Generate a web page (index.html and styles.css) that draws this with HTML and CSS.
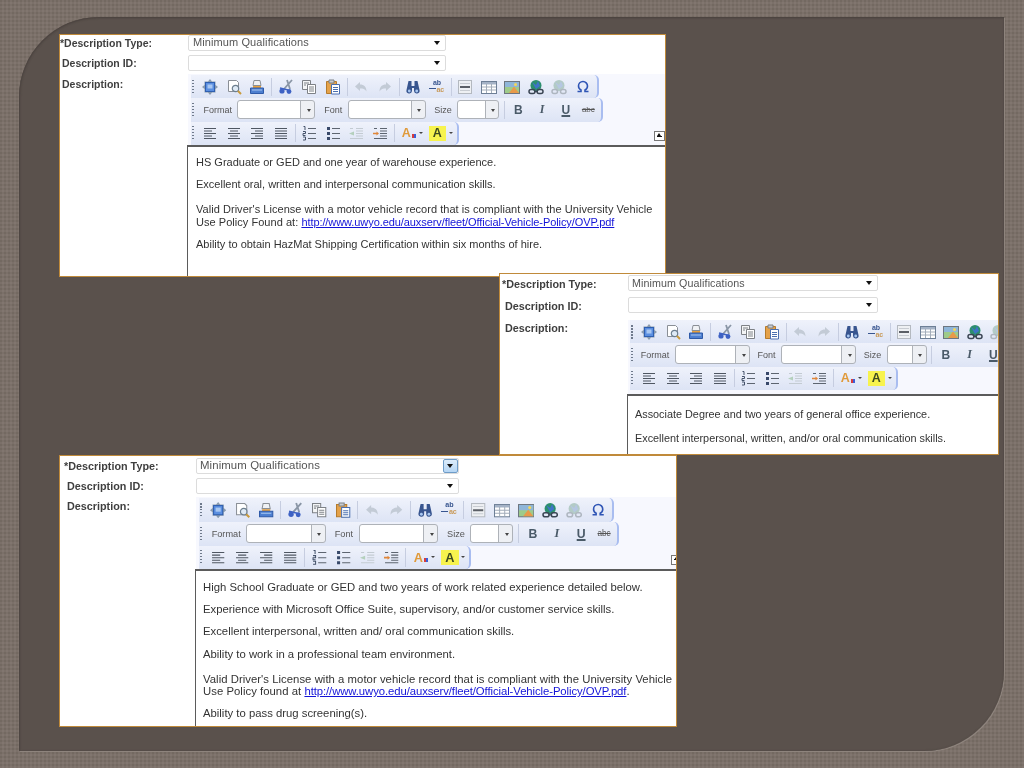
FILE: index.html
```html
<!DOCTYPE html>
<html lang="en">
<head>
<meta charset="utf-8">
<title>Description Examples</title>
<link rel="stylesheet" href="styles.css">
</head>
<body>
<svg class="defs" aria-hidden="true">
  <symbol id="fit" viewBox="0 0 16 16"><path d="M8 0l2 2.500h3.500V6L16 8l-2.500 2v3.500H10L8 16l-2-2.500H2.500V10L0 8l2.500-2V2.500H6z" fill="#8a9bae"/><rect x="3.500" y="3.500" width="9" height="9" fill="#5b8fe0" stroke="#2f5fb0"/><rect x="5.500" y="5.500" width="5" height="4" fill="#a9c8f2"/></symbol>
  <symbol id="preview" viewBox="0 0 16 16"><path d="M2.500 1.500h8l2 2v9h-10z" fill="#fff" stroke="#8a8f96"/><circle cx="9.500" cy="9.500" r="3.200" fill="#dfeaf5" stroke="#6d7f8f" stroke-width="1.200"/><path d="M12 12l3 3" stroke="#c99a3c" stroke-width="2"/></symbol>
  <symbol id="print" viewBox="0 0 16 16"><path d="M5 1.500h6l1 5H4z" fill="#f0f2f5" stroke="#8a8f96"/><path d="M4 7h8v2H4z" fill="#e9a13c"/><path d="M1.500 9h13v5.500h-13z" fill="#4d7fd0" stroke="#2f5aa8"/><path d="M3 11h10" stroke="#a9c8f2"/></symbol>
  <symbol id="cut" viewBox="0 0 16 16"><path d="M14 1L6 10M9 1l3 9" stroke="#8a96a6" stroke-width="1.800" fill="none"/><circle cx="4" cy="12" r="2.600" fill="#3e62c4"/><circle cx="11" cy="12.500" r="2.400" fill="#3e62c4"/><path d="M2 9l8 2" stroke="#3e62c4" stroke-width="1.500"/></symbol>
  <symbol id="copy" viewBox="0 0 16 16"><path d="M1.500 1.500h8v9h-8z" fill="#f4f5f6" stroke="#7d8186"/><path d="M6.500 5.500h8v9h-8z" fill="#fff" stroke="#7d8186"/><path d="M8 8h5M8 10h5M8 12h5M3 4h5M3 6h2" stroke="#7d8186"/></symbol>
  <symbol id="paste" viewBox="0 0 16 16"><path d="M1.500 2.500h10v12h-10z" fill="#e5a24a" stroke="#b57b2c"/><path d="M4 1h5v3H4z" fill="#c9ccd1" stroke="#7d8186"/><path d="M6.500 5.500h8v9.500h-8z" fill="#fff" stroke="#4a6fb0"/><path d="M8 8.500h5M8 10.500h5M8 12.500h5" stroke="#4a6fb0"/></symbol>
  <symbol id="undo" viewBox="0 0 16 16"><path d="M7 3L2 7.500 7 12V9.500c3 0 5 .5 6.500 3C13.500 8 11 5.500 7 5.500z" fill="#c3cbd6"/></symbol>
  <symbol id="redo" viewBox="0 0 16 16"><path d="M9 3l5 4.500L9 12V9.500c-3 0-5 .5-6.500 3C2.500 8 5 5.500 9 5.500z" fill="#c3cbd6"/></symbol>
  <symbol id="find" viewBox="0 0 16 16"><path d="M3.500 2h3v5h3V2h3l2 9a2.800 2.800 0 1 1-5.500 1V9h-2v3A2.800 2.800 0 1 1 1.500 11z" fill="#38558f"/><circle cx="4.300" cy="12" r="1.400" fill="#a9c8f2"/><circle cx="11.700" cy="12" r="1.400" fill="#a9c8f2"/></symbol>
  <symbol id="hr" viewBox="0 0 16 16"><rect x="1.500" y="1.500" width="13" height="13" fill="#eef0f3" stroke="#b4b9c0"/><path d="M3 8h10" stroke="#5b5f66" stroke-width="2"/><path d="M3 4.500h10M3 11.500h10" stroke="#c8ccd2"/></symbol>
  <symbol id="table" viewBox="0 0 16 16"><rect x=".5" y="2.500" width="15" height="12" fill="#fff" stroke="#6d7f96"/><path d="M1 3h14v2.500H1z" fill="#a4b2c6"/><path d="M5.500 5v9M10.500 5v9M1 8h14M1 11h14" stroke="#a3adba"/></symbol>
  <symbol id="image" viewBox="0 0 16 16"><rect x=".5" y="2.500" width="15" height="12" fill="#9ecb8a" stroke="#6d7680"/><path d="M1 3h14v5H1z" fill="#8fb6d9"/><path d="M5 14l5-6.500 5 6.500z" fill="#e89a4a"/><circle cx="11.500" cy="5.500" r="1.500" fill="#f4d65a"/></symbol>
  <symbol id="link" viewBox="0 0 16 16"><circle cx="8" cy="6.500" r="5.500" fill="#2c8f6e"/><path d="M4 3l4 3 2-4 2 5-4 3z" fill="#3f74c8"/><rect x="1" y="10.500" width="6" height="4" rx="2" fill="none" stroke="#3b4654" stroke-width="1.500"/><rect x="9" y="10.500" width="6" height="4" rx="2" fill="none" stroke="#3b4654" stroke-width="1.500"/><path d="M6 12.500h4" stroke="#3b4654"/></symbol>
  <symbol id="unlink" viewBox="0 0 16 16"><circle cx="8" cy="6.500" r="5.500" fill="#b3cbc6"/><path d="M4 3l4 3 2-4 2 5-4 3z" fill="#b5c7e2"/><rect x="1" y="10.500" width="5.500" height="4" rx="2" fill="none" stroke="#aeb6c0" stroke-width="1.500"/><rect x="9.500" y="10.500" width="5.500" height="4" rx="2" fill="none" stroke="#aeb6c0" stroke-width="1.500"/></symbol>
  <symbol id="omega" viewBox="0 0 16 16"><path d="M2.500 12.500h3.500v-1.500A4.500 4.500 0 0 1 3.500 7a4.500 4.500 0 0 1 9 0A4.500 4.500 0 0 1 10 11v1.500h3.500" fill="none" stroke="#2f55b5" stroke-width="1.600"/></symbol>
  <symbol id="al" viewBox="0 0 16 16"><path d="M2 3.500h12M2 6h8M2 8.500h12M2 11h8M2 13.500h12" stroke="#4f5762" fill="none"/></symbol>
  <symbol id="ac" viewBox="0 0 16 16"><path d="M2 3.500h12M4 6h8M2 8.500h12M4 11h8M2 13.500h12" stroke="#4f5762" fill="none"/></symbol>
  <symbol id="ar" viewBox="0 0 16 16"><path d="M2 3.500h12M6 6h8M2 8.500h12M6 11h8M2 13.500h12" stroke="#4f5762" fill="none"/></symbol>
  <symbol id="aj" viewBox="0 0 16 16"><path d="M2 3.500h12M2 6h12M2 8.500h12M2 11h12M2 13.500h12" stroke="#4f5762" fill="none"/></symbol>
  <symbol id="ol" viewBox="0 0 16 16"><path d="M7 3.500h8M7 8.500h8M7 13.500h8" stroke="#5d6570" fill="none"/><path d="M2.500 1.500h1.500v3.500M2 6.500h2.500v2H2v2h2.500M2 12h2.500v3H2" stroke="#44526a" fill="none"/></symbol>
  <symbol id="ul" viewBox="0 0 16 16"><path d="M7 3.500h8M7 8.500h8M7 13.500h8" stroke="#5d6570" fill="none"/><path d="M2 2h3v3H2zM2 7h3v3H2zM2 12h3v3H2z" fill="#38496a"/></symbol>
  <symbol id="outdent" viewBox="0 0 16 16"><path d="M8 3.500h7M8 6h7M8 8.500h7M8 11h7M2 13.500h13M2 3.500h3" stroke="#c3cbd2" fill="none"/><path d="M6 6.500L1 8.500l5 2z" fill="#b4d0bc"/></symbol>
  <symbol id="indent" viewBox="0 0 16 16"><path d="M8 3.500h7M8 6h7M8 8.500h7M8 11h7M2 13.500h13M2 3.500h3" stroke="#5d6570" fill="none"/><path d="M1 7.700h3.500V6.500L7 8.500l-2.500 2V9.300H1z" fill="#e0863a"/></symbol>
</svg>

<main class="slide">

  <section class="shot p1">
    <div class="row"><div class="lbl req">*Description Type:</div><div class="sel"><span>Minimum Qualifications</span><i class="caret"></i></div></div>
    <div class="row"><div class="lbl">Description ID:</div><div class="sel"><span></span><i class="caret"></i></div></div>
    <div class="row grow">
      <div class="lbl last">Description:</div>
      <div class="ed">
        <div class="toolbar">
          <div class="bar">
            <i class="grip"></i>
            <svg class="ic"><use href="#fit"/></svg><svg class="ic"><use href="#preview"/></svg><svg class="ic"><use href="#print"/></svg><i class="sep"></i>
            <svg class="ic"><use href="#cut"/></svg><svg class="ic"><use href="#copy"/></svg><svg class="ic"><use href="#paste"/></svg><i class="sep"></i>
            <svg class="ic"><use href="#undo"/></svg><svg class="ic"><use href="#redo"/></svg><i class="sep"></i>
            <svg class="ic"><use href="#find"/></svg><span class="ic rep"><b>ab</b><b class="ac">ac</b></span><i class="sep"></i>
            <svg class="ic"><use href="#hr"/></svg><svg class="ic"><use href="#table"/></svg><svg class="ic"><use href="#image"/></svg><svg class="ic"><use href="#link"/></svg><svg class="ic"><use href="#unlink"/></svg><svg class="ic"><use href="#omega"/></svg>
          </div>
          <div class="bar">
            <i class="grip"></i>
            <span class="cap">Format</span><span class="combo"><i class="arrow"></i></span>
            <span class="cap">Font</span><span class="combo"><i class="arrow"></i></span>
            <span class="cap">Size</span><span class="combo short"><i class="arrow"></i></span><i class="sep"></i>
            <b class="tbtn">B</b><em class="tbtn">I</em><u class="tbtn">U</u><s class="tbtn abc">abc</s>
          </div>
          <div class="bar">
            <i class="grip"></i>
            <svg class="ic"><use href="#al"/></svg><svg class="ic"><use href="#ac"/></svg><svg class="ic"><use href="#ar"/></svg><svg class="ic"><use href="#aj"/></svg><i class="sep"></i>
            <svg class="ic"><use href="#ol"/></svg><svg class="ic"><use href="#ul"/></svg><svg class="ic"><use href="#outdent"/></svg><svg class="ic"><use href="#indent"/></svg><i class="sep"></i>
            <span class="color"><b class="a-font">A</b><i class="dots"></i><i class="mini"></i></span><span class="color"><b class="a-hi">A</b><i class="mini"></i></span>
          </div>
          <i class="collapse"></i>
        </div>
        <div class="body">
          <p>HS Graduate or GED and one year of warehouse experience.</p>
          <p>Excellent oral, written and interpersonal communication skills.</p>
          <p class="policy">Valid Driver's License with a motor vehicle record that is compliant with the University Vehicle<br>Use Policy Found at: <a href="#">http://www.uwyo.edu/auxserv/fleet/Official-Vehicle-Policy/OVP.pdf</a></p>
          <p>Ability to obtain HazMat Shipping Certification within six months of hire.</p>
        </div>
      </div>
    </div>
  </section>

  <section class="shot p2">
    <div class="row"><div class="lbl req">*Description Type:</div><div class="sel"><span>Minimum Qualifications</span><i class="caret"></i></div></div>
    <div class="row"><div class="lbl">Description ID:</div><div class="sel"><span></span><i class="caret"></i></div></div>
    <div class="row grow">
      <div class="lbl last">Description:</div>
      <div class="ed">
        <div class="toolbar">
          <div class="bar">
            <i class="grip"></i>
            <svg class="ic"><use href="#fit"/></svg><svg class="ic"><use href="#preview"/></svg><svg class="ic"><use href="#print"/></svg><i class="sep"></i>
            <svg class="ic"><use href="#cut"/></svg><svg class="ic"><use href="#copy"/></svg><svg class="ic"><use href="#paste"/></svg><i class="sep"></i>
            <svg class="ic"><use href="#undo"/></svg><svg class="ic"><use href="#redo"/></svg><i class="sep"></i>
            <svg class="ic"><use href="#find"/></svg><span class="ic rep"><b>ab</b><b class="ac">ac</b></span><i class="sep"></i>
            <svg class="ic"><use href="#hr"/></svg><svg class="ic"><use href="#table"/></svg><svg class="ic"><use href="#image"/></svg><svg class="ic"><use href="#link"/></svg><svg class="ic"><use href="#unlink"/></svg>
          </div>
          <div class="bar">
            <i class="grip"></i>
            <span class="cap">Format</span><span class="combo"><i class="arrow"></i></span>
            <span class="cap">Font</span><span class="combo"><i class="arrow"></i></span>
            <span class="cap">Size</span><span class="combo short"><i class="arrow"></i></span><i class="sep"></i>
            <b class="tbtn">B</b><em class="tbtn">I</em><u class="tbtn">U</u>
          </div>
          <div class="bar">
            <i class="grip"></i>
            <svg class="ic"><use href="#al"/></svg><svg class="ic"><use href="#ac"/></svg><svg class="ic"><use href="#ar"/></svg><svg class="ic"><use href="#aj"/></svg><i class="sep"></i>
            <svg class="ic"><use href="#ol"/></svg><svg class="ic"><use href="#ul"/></svg><svg class="ic"><use href="#outdent"/></svg><svg class="ic"><use href="#indent"/></svg><i class="sep"></i>
            <span class="color"><b class="a-font">A</b><i class="dots"></i><i class="mini"></i></span><span class="color"><b class="a-hi">A</b><i class="mini"></i></span>
          </div>
        </div>
        <div class="body">
          <p>Associate Degree and two years of general office experience.</p>
          <p>Excellent interpersonal, written, and/or oral communication skills.</p>
        </div>
      </div>
    </div>
  </section>

  <section class="shot p3">
    <div class="row"><div class="lbl req">*Description Type:</div><div class="sel"><span>Minimum Qualifications</span><i class="caret hot"></i></div></div>
    <div class="row"><div class="lbl">Description ID:</div><div class="sel"><span></span><i class="caret"></i></div></div>
    <div class="row grow">
      <div class="lbl last">Description:</div>
      <div class="ed">
        <div class="toolbar">
          <div class="bar">
            <i class="grip"></i>
            <svg class="ic"><use href="#fit"/></svg><svg class="ic"><use href="#preview"/></svg><svg class="ic"><use href="#print"/></svg><i class="sep"></i>
            <svg class="ic"><use href="#cut"/></svg><svg class="ic"><use href="#copy"/></svg><svg class="ic"><use href="#paste"/></svg><i class="sep"></i>
            <svg class="ic"><use href="#undo"/></svg><svg class="ic"><use href="#redo"/></svg><i class="sep"></i>
            <svg class="ic"><use href="#find"/></svg><span class="ic rep"><b>ab</b><b class="ac">ac</b></span><i class="sep"></i>
            <svg class="ic"><use href="#hr"/></svg><svg class="ic"><use href="#table"/></svg><svg class="ic"><use href="#image"/></svg><svg class="ic"><use href="#link"/></svg><svg class="ic"><use href="#unlink"/></svg><svg class="ic"><use href="#omega"/></svg>
          </div>
          <div class="bar">
            <i class="grip"></i>
            <span class="cap">Format</span><span class="combo"><i class="arrow"></i></span>
            <span class="cap">Font</span><span class="combo"><i class="arrow"></i></span>
            <span class="cap">Size</span><span class="combo short"><i class="arrow"></i></span><i class="sep"></i>
            <b class="tbtn">B</b><em class="tbtn">I</em><u class="tbtn">U</u><s class="tbtn abc">abc</s>
          </div>
          <div class="bar">
            <i class="grip"></i>
            <svg class="ic"><use href="#al"/></svg><svg class="ic"><use href="#ac"/></svg><svg class="ic"><use href="#ar"/></svg><svg class="ic"><use href="#aj"/></svg><i class="sep"></i>
            <svg class="ic"><use href="#ol"/></svg><svg class="ic"><use href="#ul"/></svg><svg class="ic"><use href="#outdent"/></svg><svg class="ic"><use href="#indent"/></svg><i class="sep"></i>
            <span class="color"><b class="a-font">A</b><i class="dots"></i><i class="mini"></i></span><span class="color"><b class="a-hi">A</b><i class="mini"></i></span>
          </div>
          <i class="collapse"></i>
        </div>
        <div class="body">
          <p>High School Graduate or GED and two years of work related experience detailed below.</p>
          <p>Experience with Microsoft Office Suite, supervisory, and/or customer service skills.</p>
          <p>Excellent interpersonal, written and/ oral communication skills.</p>
          <p>Ability to work in a professional team environment.</p>
          <p class="policy">Valid Driver's License with a motor vehicle record that is compliant with the University Vehicle<br>Use Policy found at <a href="#">http://www.uwyo.edu/auxserv/fleet/Official-Vehicle-Policy/OVP.pdf</a>.</p>
          <p>Ability to pass drug screening(s).</p>
        </div>
      </div>
    </div>
  </section>

</main>
</body>
</html>
```

FILE: styles.css
```css
* { box-sizing: border-box; }
html, body { margin: 0; height: 100%; }
body {
  width: 1024px;
  height: 768px;
  overflow: hidden;
  padding: 17px 20px 17px 19px;
  background-color: #7b7069;
  background-image:
    radial-gradient(circle at 1px 1px, #736961 0.9px, transparent 1.2px),
    radial-gradient(circle at 3px 3px, #81766f 0.9px, transparent 1.2px);
  background-size: 4px 4px;
  font-family: "Liberation Sans", Arial, sans-serif;
}
.defs { position: absolute; width: 0; height: 0; }

.slide {
  position: relative;
  width: 985px;
  height: 734px;
  background: #5a514c;
  border-radius: 80px 0 80px 0;
  box-shadow: inset 0 1px 2px #4a423e, inset 1px 0 2px #4f4743, 1px 1px 0 #8e847d;
}

/* screenshots pasted on the slide */
.shot {
  position: absolute;
  display: flex;
  flex-direction: column;
  overflow: hidden;
  background: #fff;
  border: 1px solid #c08a3a;
  filter: blur(0.35px);
  font-size: var(--ui);
  --cap-l: .7em; --first-cap: .55em; --combo-w: 7.800em; --short-w: 4.200em;
}
.p1 {
  left: 40px; top: 17px; width: 607px; height: 243px;
  --ui: 10px; --label: 128px; --sel: 258px; --sel-h: 16px; --gap: 4px; --pad-top: 0px;
  --lbl: 10.500px; --sel-font: 11px; --body: 11px; --lead: 12.500px;
  --pad-l: 2px; --req: -2px; --body-pad: 9px 8px; --p-gap: 9.700px; --toolbar-h: 71px;
  --collapse-r: 0px; --tool-top: -1px; --lbl-top: 2px; --last-top: 3px; --bar-x: 3px; --bar-top: 1px;
  --sel-up: 2px; --sel-x: 4px;
}
.p2 {
  left: 480px; top: 256px; width: 500px; height: 182px;
  --ui: 10px; --label: 128px; --sel: 250px; --sel-h: 16px; --gap: 6px; --pad-top: 1px;
  --lbl: 10.800px; --sel-font: 10.700px; --body: 10.850px; --lead: 13px;
  --pad-l: 5px; --req: -3px; --body-pad: 12px 7px; --p-gap: 11px; --toolbar-h: 74px;
  --collapse-r: 0px; --tool-top: 1px; --lbl-top: 3px; --last-top: 3px; --bar-x: 2px; --bar-top: 0px;
  --sel-up: 0px; --sel-x: 3px;
  --cap-l: .55em; --first-cap: .35em; --combo-w: 7.550em; --short-w: 4em;
}
.p3 {
  left: 40px; top: 438px; width: 618px; height: 272px;
  --ui: 10.200px; --label: 136px; --sel: 263px; --sel-h: 16px; --gap: 4px; --pad-top: 2px;
  --lbl: 10.800px; --sel-font: 11.400px; --body: 11.320px; --lead: 12.500px;
  --pad-l: 7px; --req: -3px; --body-pad: 10px 7px; --p-gap: 9.700px; --toolbar-h: 72px;
  --collapse-r: -6px; --tool-top: -1px; --lbl-top: 2px; --last-top: 2px; --bar-x: 3px; --bar-top: 1px;
  --sel-up: 2px; --sel-x: 3px;
}

.row {
  display: flex;
  flex: none;
  margin-bottom: var(--gap);
  padding-left: var(--pad-l);
}
.row:first-child { margin-top: var(--pad-top); }
.row.grow { flex: 1; margin-bottom: 0; min-height: 0; }
.lbl {
  flex: none;
  width: calc(var(--label) - var(--pad-l));
  padding-top: var(--lbl-top);
  font-size: var(--lbl);
  font-weight: bold;
  color: #3f3f3f;
}
.lbl.last { padding-top: var(--last-top); }
.lbl.req { margin-left: var(--req); width: calc(var(--label) - var(--pad-l) - var(--req)); }

.sel {
  display: flex;
  align-items: center;
  width: var(--sel);
  height: var(--sel-h);
  border: 1px solid #dcdcdc;
  border-radius: 2px;
  background: #fff;
  color: #555;
  font-size: var(--sel-font);
  letter-spacing: .1px;
}
.sel span { flex: 1; padding: 0 0 var(--sel-up) var(--sel-x); }
.caret { position: relative; flex: none; width: 15px; height: 100%; }
.caret::after {
  content: "";
  position: absolute;
  left: 4px; top: 5px;
  border: 3.500px solid transparent;
  border-top: 4px solid #111;
  border-bottom: 0;
}
.caret.hot { background: linear-gradient(#dcecfb, #b5d6f5); border: 1px solid #6e9cc8; border-radius: 2px; }
.caret.hot::after { left: 3px; top: 4px; }

/* rich text editor */
.ed { flex: 1; display: flex; flex-direction: column; min-width: 0; min-height: 0; }
.toolbar {
  position: relative;
  flex: none;
  height: var(--toolbar-h);
  margin-top: var(--tool-top);
  padding: var(--bar-top) 0 0 var(--bar-x);
  background: #f7f8fe;
}
.bar {
  display: flex;
  align-items: center;
  width: max-content;
  height: 2.330em;
  padding-right: .2em;
  background: linear-gradient(#eff2fb, #dde4f5);
  border-right: 2px solid #a9bdf0;
  border-radius: 0 .5em .5em 0;
}
.grip {
  flex: none;
  width: 2px;
  height: 1.400em;
  margin: 0 .45em 0 .1em;
  background: repeating-linear-gradient(#6f7a8c 0 1.500px, transparent 1.500px 3px);
}
.ic { flex: none; width: 1.600em; height: 1.600em; margin: 0 .375em; }
.rep { position: relative; display: block; color: #38558f; }
.rep b { display: block; padding-left: .6em; font-size: .7em; line-height: 1.050em; }
.rep .ac { padding-left: 1.100em; color: #c89a5a; }
.rep::before {
  content: "";
  position: absolute;
  left: 0; top: .95em;
  width: .7em;
  height: 0;
  border-top: 1px solid #38558f;
}
.sep { flex: none; width: 1px; height: 1.800em; margin: 0 .2em; background: #c6cde0; }
.cap { margin: 0 .6em 0 var(--cap-l); font-size: .9em; color: #555; }
.bar > .grip + .cap { margin-left: var(--first-cap); }
.combo {
  position: relative;
  flex: none;
  width: var(--combo-w);
  height: 1.900em;
  margin-right: .25em;
  border: 1px solid #aeb2b8;
  border-radius: 3px;
  background: linear-gradient(to right, #fff 0 calc(100% - 1.350em), #aeb2b8 calc(100% - 1.350em) calc(100% - 1.350em + 1px), #eef0f4 calc(100% - 1.350em + 1px));
}
.combo.short { width: var(--short-w); }
.arrow {
  position: absolute;
  right: .35em; top: .75em;
  border: .25em solid transparent;
  border-top: .3em solid #444;
  border-bottom: 0;
}
.tbtn {
  flex: none;
  text-align: center;
  font-size: 1.200em;
  width: 1.950em;
  color: #4a5a68;
  text-decoration-thickness: 2px;
}
.tbtn:is(u) { font-weight: bold; }
.tbtn:is(em) { width: 2em; font-family: "Liberation Serif", serif; font-weight: bold; }
.tbtn.abc { font-size: .8em; width: 2.700em; text-decoration-thickness: 1px; color: #555; }
.color { position: relative; display: flex; align-items: center; flex: none; width: 2.900em; padding-left: .3em; }
.a-font, .a-hi { display: block; text-align: center; font-size: 1.250em; line-height: 1.200em; }
.a-font { width: 1.100em; color: #e09a3a; }
.a-hi { width: 1.400em; color: #3d4a20; background: #f7f34e; }
.dots { width: .4em; height: .4em; margin: .55em 0 0 -.1em; background: linear-gradient(to right, #d83c3c 50%, #3c60d8 50%); }
.mini { margin-left: .25em; border: .22em solid transparent; border-top: .28em solid #444; border-bottom: 0; }
.collapse {
  position: absolute;
  right: var(--collapse-r);
  bottom: .4em;
  width: 11px;
  height: 10px;
  background: linear-gradient(#111, #111) center / 5px 1px no-repeat, #fff;
  border: 1px solid #777;
}
.collapse::after {
  content: "";
  position: absolute;
  left: 2px; top: 1px;
  border: 2.500px solid transparent;
  border-bottom: 3px solid #111;
  border-top: 0;
}

.body {
  flex: 1;
  min-height: 0;
  margin-left: -1px;
  padding: var(--body-pad);
  overflow: hidden;
  background: #fff;
  border-top: 2px solid #5b5b5b;
  border-left: 1px solid #5b5b5b;
  font-size: var(--body);
  line-height: var(--lead);
  color: #333;
}
.body p { margin: 0 0 var(--p-gap); white-space: nowrap; }
.body .policy { margin-top: calc(var(--p-gap) + 3px); letter-spacing: .04px; }
.body a { color: #1414d8; letter-spacing: -.08px; }
```
